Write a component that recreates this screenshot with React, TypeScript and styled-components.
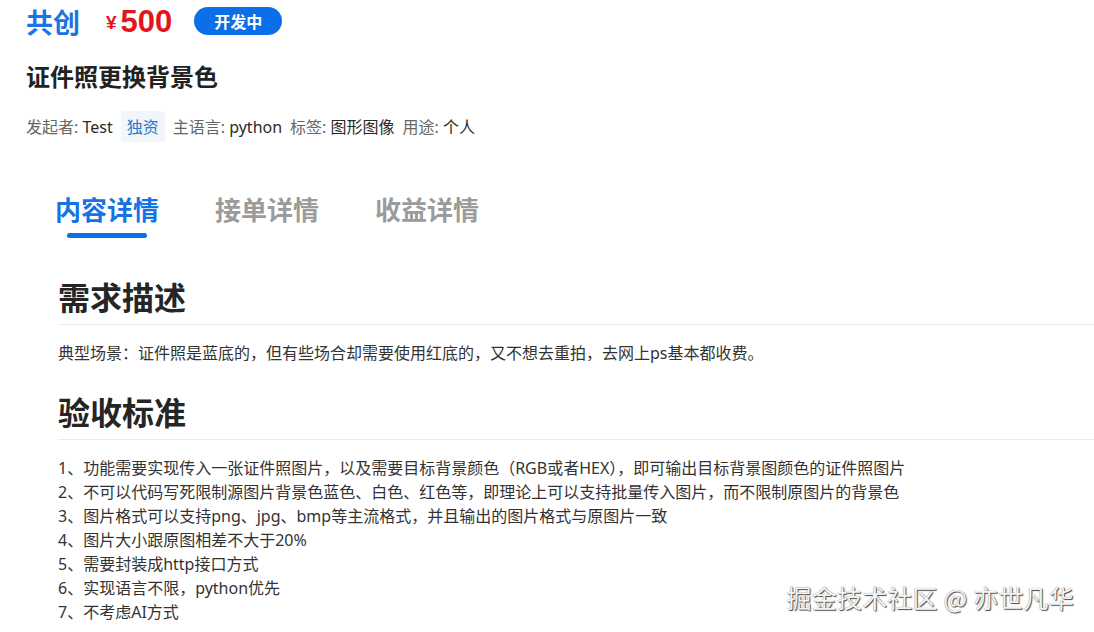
import React from "react";
import styled, { createGlobalStyle } from "styled-components";

const Global = createGlobalStyle`
  html, body { margin: 0; padding: 0; background: #fff; }
  body {
    font-family: "Noto Sans", "Noto Sans CJK SC", sans-serif;
    color: #333;
    overflow: hidden;
  }
`;

const Page = styled.div`
  position: relative;
  width: 1094px;
  height: 632px;
  overflow: hidden;
  display: flex;
  flex-direction: column;
`;

const Header = styled.div`
  display: flex;
  align-items: center;
  height: 40px;
  padding-left: 26px;
  margin-top: 1px;
`;

const Brand = styled.div`
  font-family: "Noto Sans CJK SC", sans-serif;
  font-size: 27px;
  font-weight: 700;
  color: #1a74e2;
  line-height: 1;
`;

const Price = styled.div`
  margin-left: 26px;
  display: flex;
  align-items: baseline;
  color: #e5141b;
  font-family: "Liberation Sans", "Noto Sans CJK SC", sans-serif;
  font-weight: 700;
  line-height: 1;
`;

const Yen = styled.span`
  font-size: 19px;
  margin-right: 4px;
  position: relative;
  top: -3px;
`;

const Amount = styled.span`
  font-size: 31px;
`;

const Badge = styled.div`
  margin-left: 22px;
  width: 88px;
  height: 28px;
  border-radius: 14px;
  background: #0b6fe8;
  color: #fff;
  font-family: "Noto Sans CJK SC", sans-serif;
  font-size: 16px;
  font-weight: 700;
  display: flex;
  align-items: center;
  justify-content: center;
`;

const Title = styled.h1`
  margin: 19px 0 0 26px;
  font-family: "Noto Sans CJK SC", sans-serif;
  font-size: 24px;
  line-height: 32px;
  font-weight: 700;
  color: #222;
`;

const Meta = styled.div`
  display: flex;
  align-items: center;
  gap: 8px;
  margin: 19px 0 0 26px;
  height: 30px;
  font-size: 16px;
`;

const MetaItem = styled.span`
  color: #666;
  white-space: nowrap;
`;

const MetaValue = styled.span`
  color: #2a2a2a;
`;

const Tag = styled.span`
  background: #f2f5f9;
  color: #2079cf;
  border-radius: 4px;
  padding: 3px 6px 4px;
  font-size: 16px;
`;

const Tabs = styled.div`
  display: flex;
  gap: 56px;
  margin: 51px 0 0 55px;
`;

const Tab = styled.div<{ $active?: boolean }>`
  position: relative;
  font-family: "Noto Sans CJK SC", sans-serif;
  font-size: 26px;
  font-weight: 700;
  line-height: 34px;
  color: ${(p) => (p.$active ? "#1573e3" : "#9b9b9b")};
  padding-bottom: 14px;
  &::after {
    content: "";
    display: ${(p) => (p.$active ? "block" : "none")};
    position: absolute;
    left: 50%;
    transform: translateX(-50%);
    bottom: 2px;
    width: 80px;
    height: 5px;
    border-radius: 3px;
    background: #0b6fe8;
  }
`;

const Content = styled.div`
  padding-left: 58px;
  margin-top: 36px;
`;

const H2 = styled.h2<{ $mt?: number }>`
  margin: ${(p) => p.$mt ?? 0}px 0 0;
  font-family: "Noto Sans CJK SC", sans-serif;
  font-size: 32px;
  line-height: 40px;
  font-weight: 700;
  color: #252525;
  padding-bottom: 8px;
  border-bottom: 1px solid #eaeaea;
`;

const Para = styled.p`
  margin: 16px 0 0;
  font-size: 16px;
  line-height: 24px;
  color: #333;
`;

const List = styled.div`
  margin-top: 16px;
  display: flex;
  flex-direction: column;
`;

const Item = styled.div`
  font-size: 16px;
  line-height: 24px;
  color: #333;
  white-space: nowrap;
`;

const Watermark = styled.div`
  position: absolute;
  right: 20px;
  bottom: 17px;
  font-family: "Noto Sans CJK SC", sans-serif;
  font-size: 25px;
  color: #f4f4f4;
  text-shadow: 1px 1px 1px #4a4a4a, 0 0 1px #777;
  letter-spacing: 0.2px;
`;

const items = [
  "1、功能需要实现传入一张证件照图片，以及需要目标背景颜色（RGB或者HEX），即可输出目标背景图颜色的证件照图片",
  "2、不可以代码写死限制源图片背景色蓝色、白色、红色等，即理论上可以支持批量传入图片，而不限制原图片的背景色",
  "3、图片格式可以支持png、jpg、bmp等主流格式，并且输出的图片格式与原图片一致",
  "4、图片大小跟原图相差不大于20%",
  "5、需要封装成http接口方式",
  "6、实现语言不限，python优先",
  "7、不考虑AI方式",
];

export default function App() {
  return (
    <Page>
      <Global />
      <Header>
        <Brand>共创</Brand>
        <Price>
          <Yen>¥</Yen>
          <Amount>500</Amount>
        </Price>
        <Badge>开发中</Badge>
      </Header>
      <Title>证件照更换背景色</Title>
      <Meta>
        <MetaItem>
          发起者: <MetaValue>Test</MetaValue>
        </MetaItem>
        <Tag>独资</Tag>
        <MetaItem>
          主语言: <MetaValue>python</MetaValue>
        </MetaItem>
        <MetaItem>
          标签: <MetaValue>图形图像</MetaValue>
        </MetaItem>
        <MetaItem>
          用途: <MetaValue>个人</MetaValue>
        </MetaItem>
      </Meta>
      <Tabs>
        <Tab $active>内容详情</Tab>
        <Tab>接单详情</Tab>
        <Tab>收益详情</Tab>
      </Tabs>
      <Content>
        <H2>需求描述</H2>
        <Para>典型场景：证件照是蓝底的，但有些场合却需要使用红底的，又不想去重拍，去网上ps基本都收费。</Para>
        <H2 $mt={26}>验收标准</H2>
        <List>
          {items.map((t) => (
            <Item key={t}>{t}</Item>
          ))}
        </List>
      </Content>
      <Watermark>掘金技术社区 @ 亦世凡华</Watermark>
    </Page>
  );
}
